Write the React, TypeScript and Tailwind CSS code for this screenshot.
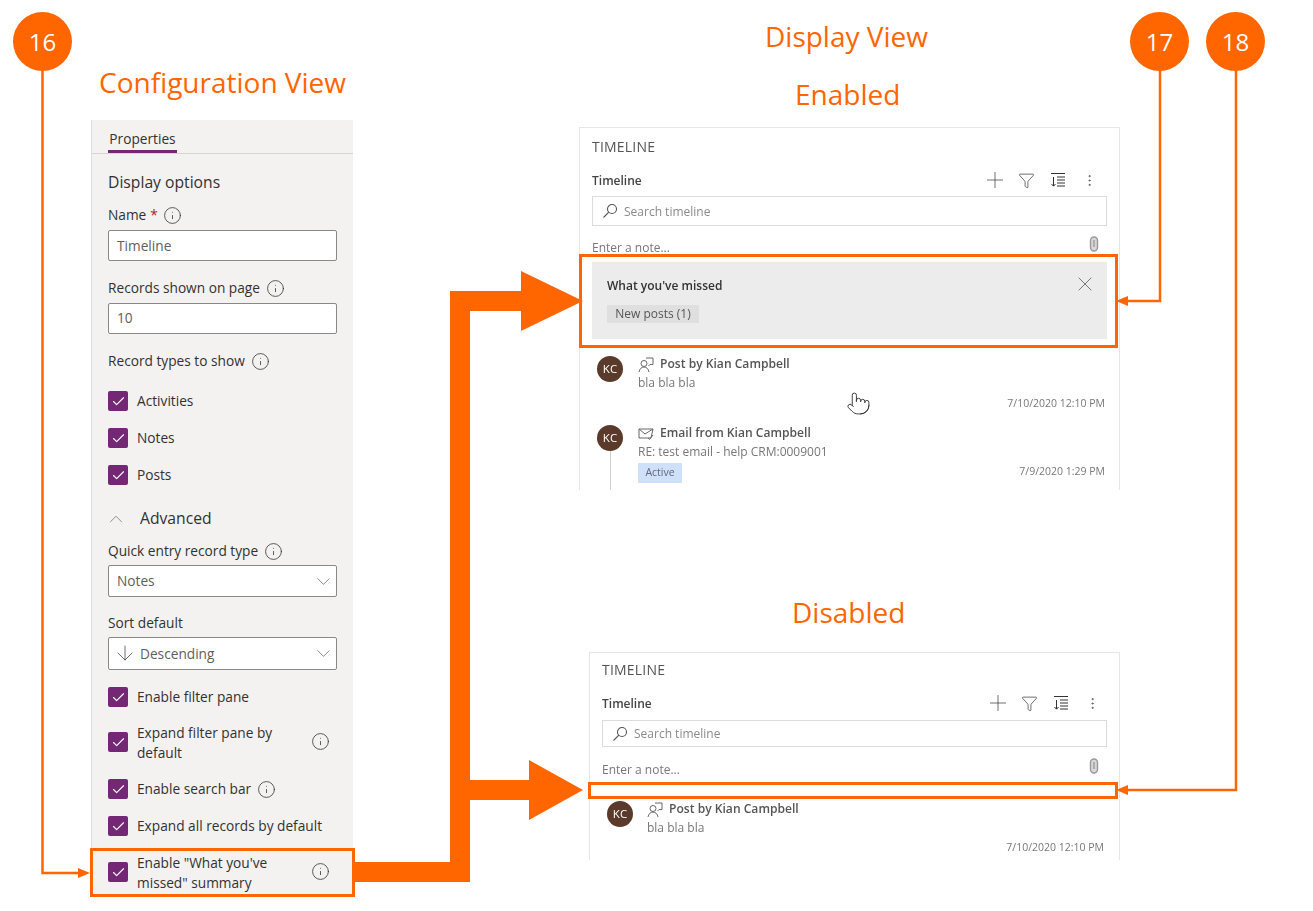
import React from "react";
import { Plus, Filter, X, ChevronDown, ChevronUp, ArrowDown, Check, Info, EllipsisVertical, Pointer } from "lucide-react";

const Box = ({ className = "" }: { className?: string }) => (
  <span className={"flex h-5 w-5 shrink-0 items-center justify-center rounded-[2px] bg-[#742774] " + className}>
    <Check size={15} strokeWidth={1.8} className="text-white" />
  </span>
);

const Tip = ({ className = "" }: { className?: string }) => (
  <Info size={19} strokeWidth={1} className={"shrink-0 text-[#333] " + className} />
);

const Label = ({ children, className = "" }: { children: React.ReactNode; className?: string }) => (
  <div className={"flex h-5 items-center text-[13.7px] leading-5 text-[#323130] " + className}>{children}</div>
);

const Field = ({ className = "", children }: { className?: string; children: React.ReactNode }) => (
  <div className={"flex w-[229px] items-center rounded-[2px] border border-[#8a8886] bg-white px-[8px] text-[13.7px] text-[#605e5c] " + className}>
    {children}
  </div>
);

const Chevron = () => <ChevronDown size={23} strokeWidth={0.75} className="-mr-[6.5px] shrink-0 text-[#605e5c]" />;

const CheckRow = ({ children, className = "", tip }: { children: React.ReactNode; className?: string; tip?: "end" | "inline" }) => (
  <div className={"flex w-[229px] items-center text-[13.7px] leading-5 text-[#323130] " + className}>
    <Box className={tip === "end" ? "-translate-y-[1px]" : ""} />
    <span className={tip === "end" ? "ml-[9px] w-[160px]" : "ml-[9px]"}>{children}</span>
    {tip === "end" && <Tip className="ml-auto mr-[7px] -translate-y-[2px]" />}
    {tip === "inline" && <Tip className="ml-[6px]" />}
  </div>
);

const ConfigPanel = () => (
  <div className="absolute left-[91px] top-[120px] h-[775px] w-[262px] border-l border-[#dcdcdc] bg-[#f3f2f1]">
    <div className="flex h-[34px] border-b border-[#d6d5d4] pl-[16px]">
      <div className="flex h-[33px] w-[69px] items-center justify-center border-b-[3px] border-[#742774] pt-[9px] text-[13.7px] text-[#323130]">
        Properties
      </div>
    </div>
    <div className="px-[16px]">
      <div className="mt-[17px] flex h-6 items-center text-[15.7px] text-[#323130]">Display options</div>
      <Label className="mt-[10px]">
        Name<span className="ml-1 text-[#a4262c]">*</span>
        <Tip className="ml-[5px]" />
      </Label>
      <Field className="mt-[5px] h-[31px] pt-[1px]">Timeline</Field>
      <Label className="mt-[17px]">
        Records shown on page
        <Tip className="ml-[6px]" />
      </Label>
      <Field className="mt-[5px] h-[31px]">10</Field>
      <Label className="mt-[17px]">
        Record types to show
        <Tip className="ml-[6px]" />
      </Label>
      <CheckRow className="mt-[20px]">Activities</CheckRow>
      <CheckRow className="mt-[17px]">Notes</CheckRow>
      <CheckRow className="mt-[17px]">Posts</CheckRow>
      <div className="mt-[24px] flex h-5 items-center text-[15.7px] text-[#323130]">
        <ChevronUp size={22} strokeWidth={0.75} className="-ml-[3px] shrink-0 text-[#605e5c]" />
        <span className="ml-[13px]">Advanced</span>
      </div>
      <Label className="mt-[12px]">
        Quick entry record type
        <Tip className="ml-[6px]" />
      </Label>
      <Field className="mt-[4px] h-[32px] justify-between">
        Notes
        <Chevron />
      </Field>
      <Label className="mt-[16px]">Sort default</Label>
      <Field className="mt-[4px] h-[33px] justify-between">
        <span className="flex items-center pt-[1px]">
          <ArrowDown size={24} strokeWidth={0.7} className="-ml-[4px] mr-[3px] -translate-y-[1px] text-[#323130]" />
          Descending
        </span>
        <Chevron />
      </Field>
      <CheckRow className="mt-[17px]">Enable filter pane</CheckRow>
      <CheckRow className="mt-[16px]" tip="end">Expand filter pane by default</CheckRow>
      <CheckRow className="mt-[16px]" tip="inline">Enable search bar</CheckRow>
      <CheckRow className="mt-[17px]">Expand all records by default</CheckRow>
      <CheckRow className="mt-[17px]" tip="end">Enable "What you've missed" summary</CheckRow>
    </div>
  </div>
);

const SortIcon = () => (
  <svg width="16" height="16" viewBox="0 0 16 16" fill="none" stroke="#333" strokeWidth="1" className="shrink-0">
    <path d="M1 1.500h14M7 5h8M7 8h8M7 11h8M7 14h8M3.500 5v9M1.500 12l2 2.200 2-2.200" />
  </svg>
);

const SearchIcon = () => (
  <svg width="16" height="16" viewBox="0 0 16 16" fill="none" stroke="#555" strokeWidth="1.100" className="mr-[6px] shrink-0">
    <circle cx="10" cy="6" r="4.500" />
    <path d="M6.800 9.200L1.500 14.500" />
  </svg>
);

const PostIcon = () => (
  <svg width="16" height="16" viewBox="0 0 16 16" fill="none" stroke="#666" strokeWidth="1" className="shrink-0">
    <circle cx="6" cy="6.500" r="3" />
    <path d="M1 15c.500-3 2.500-5 5-5s4.500 2 5 5M8 1h7v6.500h-3l-1.500 1.500" />
  </svg>
);

const MailIcon = () => (
  <svg width="16" height="16" viewBox="0 0 16 16" fill="none" stroke="#666" strokeWidth="1" className="shrink-0">
    <path d="M1 3h14l-2 9H1zM1 3l6 5 8-5M10 12l1.500 1.500L15 9" />
  </svg>
);

const Clip = () => (
  <svg width="10" height="16" viewBox="0 0 10 16" fill="#d8d8d8" stroke="#9a9a9a" strokeWidth="1.400" className="shrink-0 -translate-y-[3px]">
    <rect x="1.500" y="1" width="7" height="14" rx="3.500" />
    <path d="M5 4v7" fill="none" />
  </svg>
);

const Avatar = () => (
  <div className="ml-[5px] mt-[2px] flex h-[26px] w-[26px] shrink-0 items-center justify-center rounded-full bg-[#5a3a2a] text-[11.5px] text-white">
    KC
  </div>
);

const Slot = ({ children }: { children: React.ReactNode }) => <span className="flex w-4 justify-center">{children}</span>;

const Head = ({ titleGap, searchGap, searchH, noteGap, right }: { titleGap: string; searchGap: string; searchH: string; noteGap: string; right: string }) => (
  <>
    <div className="flex h-5 items-center text-[14px] tracking-[0.2px] text-[#555]">TIMELINE</div>
    <div className={"flex h-6 items-center justify-between " + titleGap}>
      <span className="pt-[1px] text-[12px] font-semibold text-[#444]">Timeline</span>
      <div className={"flex items-center gap-[15.500px] " + right}>
        <Slot><Plus size={26} strokeWidth={0.65} className="shrink-0 text-[#333]" /></Slot>
        <Slot><Filter size={17} strokeWidth={1} className="shrink-0 text-[#333]" /></Slot>
        <Slot><SortIcon /></Slot>
        <Slot><EllipsisVertical size={15} strokeWidth={1} className="shrink-0 text-[#333]" /></Slot>
      </div>
    </div>
    <div className={"flex items-center border border-[#dcdcdc] pl-[9px] text-[12px] text-[#8a8a8a] " + searchGap + " " + searchH}>
      <SearchIcon />
      <span className="pt-[1px]">Search timeline</span>
    </div>
    <div className={"flex h-5 items-center justify-between pr-[8px] text-[12px] text-[#777] " + noteGap}>
      <span className="pt-[1px]">Enter a note...</span>
      <Clip />
    </div>
  </>
);

const Entry = ({ icon, title, sub, line, col = "w-[46px]", children }: { icon: React.ReactNode; title: string; sub: string; line?: boolean; col?: string; children: React.ReactNode }) => (
  <div className="flex">
    <div className={"flex shrink-0 flex-col " + col}>
      <Avatar />
      {line && <div className="ml-[18px] w-px flex-1 bg-[#d0d0d0]" />}
    </div>
    <div className="min-w-0 flex-1">
      <div className="flex h-[19px] items-center gap-[6px] pt-[2px] text-[12.1px] font-semibold text-[#555]">
        {icon}
        {title}
      </div>
      <div className="flex h-[19px] items-center text-[12px] text-[#777]">{sub}</div>
      {children}
    </div>
  </div>
);

const Stamp = ({ children }: { children: React.ReactNode }) => (
  <span className="text-[10.500px] text-[#777]">{children}</span>
);

const EnabledCard = () => (
  <div className="absolute left-[579px] top-[127px] h-[363px] w-[541px] overflow-hidden border border-b-0 border-[#e6e6e6] pl-[12px] pr-[12px] pt-[8px] blur-[0.3px]">
    <Head titleGap="mt-[12px]" searchGap="mt-[4px]" searchH="h-[30px]" noteGap="mt-[11px]" right="mr-[10px]" />
    <div className="mt-[5px] h-[77px] bg-[#ececec] pl-[15px] pr-[10px]">
      <div className="flex h-4 translate-y-[16px] items-center justify-between">
        <span className="text-[12px] font-semibold text-[#333]">What you've missed</span>
        <X size={24} strokeWidth={0.7} className="shrink-0 -translate-y-[2px] text-[#444]" />
      </div>
      <div className="mt-[27px] flex h-[18px] w-[92px] items-center justify-center bg-[#dfdfdf] text-[12px] text-[#555]">New posts (1)</div>
    </div>
    <div className="mt-[15px]">
      <Entry icon={<PostIcon />} title="Post by Kian Campbell" sub="bla bla bla">
        <div className="mt-[3px] flex h-[18px] items-center justify-end pr-[2px]">
          <Stamp>7/10/2020 12:10 PM</Stamp>
        </div>
      </Entry>
    </div>
    <div className="mt-[10px]">
      <Entry icon={<MailIcon />} title="Email from Kian Campbell" sub="RE: test email - help CRM:0009001" line>
        <div className="mt-[2px] flex h-[20px] items-center justify-between pr-[2px]">
          <span className="flex h-5 w-[44px] items-center justify-center rounded-[1px] bg-[#cfe0fb] text-[10.500px] text-[#667]">Active</span>
          <span className="-translate-y-[4px]"><Stamp>7/9/2020 1:29 PM</Stamp></span>
        </div>
        <div className="h-[8px]" />
      </Entry>
    </div>
    <Pointer size={25} strokeWidth={0.9} className="absolute left-[266px] top-[263px] text-[#333]" />
  </div>
);

const DisabledCard = () => (
  <div className="absolute left-[589px] top-[652px] h-[208px] w-[531px] overflow-hidden border border-b-0 border-[#e6e6e6] pl-[12px] pr-[12px] pt-[6px] blur-[0.3px]">
    <Head titleGap="mt-[12px]" searchGap="mt-[5px]" searchH="h-[27px]" noteGap="mt-[12px]" right="mr-[7px]" />
    <div className="mt-[20px]">
      <Entry icon={<PostIcon />} title="Post by Kian Campbell" sub="bla bla bla" col="w-[45px]">
        <div className="mt-[2px] flex h-[18px] items-center justify-end pr-[3px]">
          <Stamp>7/10/2020 12:10 PM</Stamp>
        </div>
      </Entry>
    </div>
  </div>
);

const Callout = ({ n, className }: { n: number; className: string }) => (
  <div className={"absolute top-[12px] flex h-[59px] w-[59px] items-center justify-center rounded-full bg-[#ff6600] text-[24px] text-white " + className}>{n}</div>
);

const Title = ({ children, className }: { children: React.ReactNode; className: string }) => (
  <div className={"absolute whitespace-nowrap text-[28px] leading-9 text-[#ff6600] " + className}>{children}</div>
);

export default function App() {
  return (
    <div className="relative h-[911px] w-[1313px] overflow-hidden bg-white font-['Open_Sans','Noto_Sans',sans-serif]">
      <ConfigPanel />
      <EnabledCard />
      <DisabledCard />
      <Title className="left-[99px] top-[64px]">Configuration View</Title>
      <Title className="left-[765px] top-[18px]">Display View</Title>
      <Title className="left-[795px] top-[76px]">Enabled</Title>
      <Title className="left-[792px] top-[594px]">Disabled</Title>
      <svg width="1313" height="911" className="pointer-events-none absolute left-0 top-0" fill="none">
        <g stroke="#ff6600" strokeWidth="3">
          <rect x="91.500" y="849.500" width="262" height="46" />
          <rect x="580.500" y="255.500" width="536" height="91" />
          <rect x="589.500" y="783.500" width="527" height="14" />
          <path d="M42.500 70V873H80M1160 70V301H1125M1236 70V790H1125" strokeWidth="2.500" />
        </g>
        <g fill="#ff6600">
          <path d="M90 873l-12-5v10zM1116 301l12-5v10zM1116 790l12-5v10z" />
          <path d="M355 862H450V291H521V271L583 301L521 331V311H470V780H529V760L583 790L529 820V800H470V882H355Z" />
        </g>
      </svg>
      <Callout n={16} className="left-[13px]" />
      <Callout n={17} className="left-[1130px]" />
      <Callout n={18} className="left-[1206px]" />
    </div>
  );
}
